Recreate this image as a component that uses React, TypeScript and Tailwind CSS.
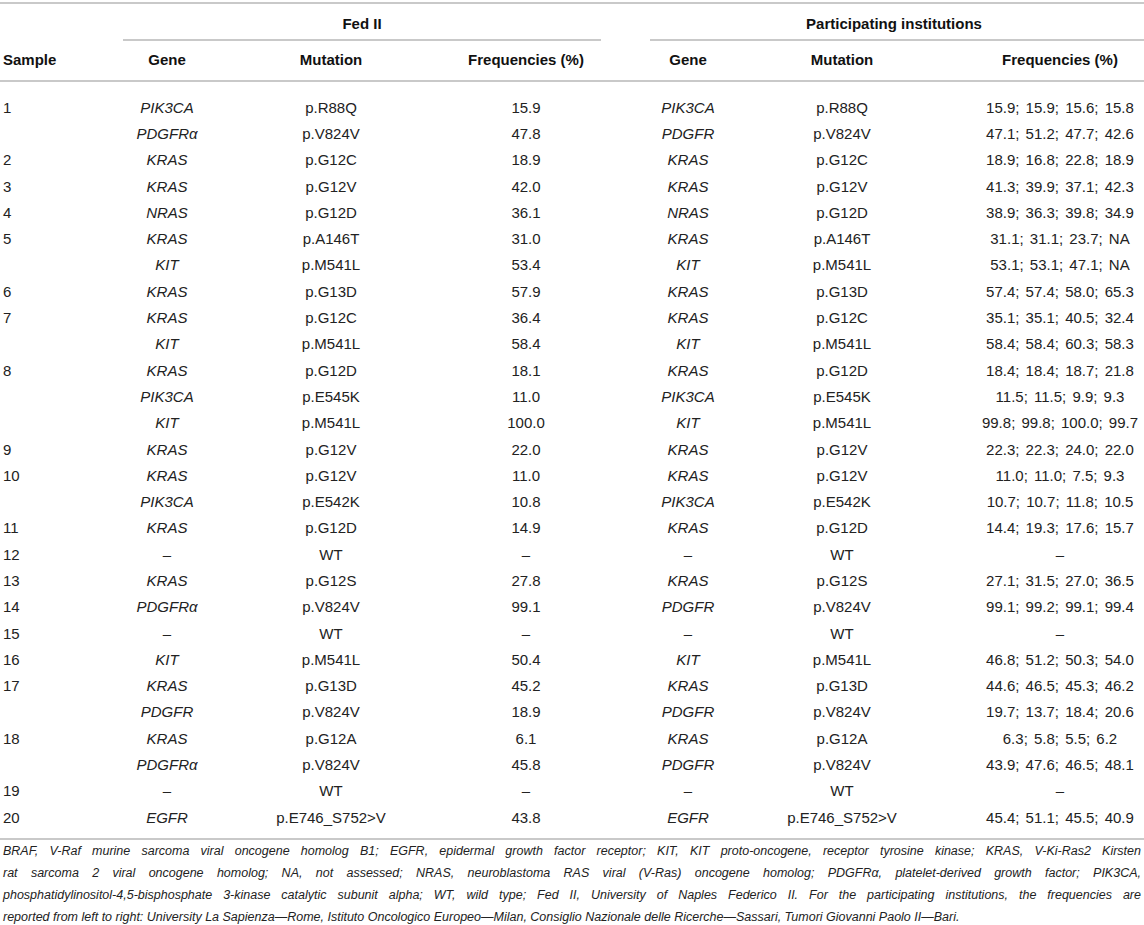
import React from "react";

type Row = [string, string, string, string, string, string, string];

const rows: Row[] = [
  ["1", "PIK3CA", "p.R88Q", "15.9", "PIK3CA", "p.R88Q", "15.9; 15.9; 15.6; 15.8"],
  ["", "PDGFRα", "p.V824V", "47.8", "PDGFR", "p.V824V", "47.1; 51.2; 47.7; 42.6"],
  ["2", "KRAS", "p.G12C", "18.9", "KRAS", "p.G12C", "18.9; 16.8; 22.8; 18.9"],
  ["3", "KRAS", "p.G12V", "42.0", "KRAS", "p.G12V", "41.3; 39.9; 37.1; 42.3"],
  ["4", "NRAS", "p.G12D", "36.1", "NRAS", "p.G12D", "38.9; 36.3; 39.8; 34.9"],
  ["5", "KRAS", "p.A146T", "31.0", "KRAS", "p.A146T", "31.1; 31.1; 23.7; NA"],
  ["", "KIT", "p.M541L", "53.4", "KIT", "p.M541L", "53.1; 53.1; 47.1; NA"],
  ["6", "KRAS", "p.G13D", "57.9", "KRAS", "p.G13D", "57.4; 57.4; 58.0; 65.3"],
  ["7", "KRAS", "p.G12C", "36.4", "KRAS", "p.G12C", "35.1; 35.1; 40.5; 32.4"],
  ["", "KIT", "p.M541L", "58.4", "KIT", "p.M541L", "58.4; 58.4; 60.3; 58.3"],
  ["8", "KRAS", "p.G12D", "18.1", "KRAS", "p.G12D", "18.4; 18.4; 18.7; 21.8"],
  ["", "PIK3CA", "p.E545K", "11.0", "PIK3CA", "p.E545K", "11.5; 11.5; 9.9; 9.3"],
  ["", "KIT", "p.M541L", "100.0", "KIT", "p.M541L", "99.8; 99.8; 100.0; 99.7"],
  ["9", "KRAS", "p.G12V", "22.0", "KRAS", "p.G12V", "22.3; 22.3; 24.0; 22.0"],
  ["10", "KRAS", "p.G12V", "11.0", "KRAS", "p.G12V", "11.0; 11.0; 7.5; 9.3"],
  ["", "PIK3CA", "p.E542K", "10.8", "PIK3CA", "p.E542K", "10.7; 10.7; 11.8; 10.5"],
  ["11", "KRAS", "p.G12D", "14.9", "KRAS", "p.G12D", "14.4; 19.3; 17.6; 15.7"],
  ["12", "–", "WT", "–", "–", "WT", "–"],
  ["13", "KRAS", "p.G12S", "27.8", "KRAS", "p.G12S", "27.1; 31.5; 27.0; 36.5"],
  ["14", "PDGFRα", "p.V824V", "99.1", "PDGFR", "p.V824V", "99.1; 99.2; 99.1; 99.4"],
  ["15", "–", "WT", "–", "–", "WT", "–"],
  ["16", "KIT", "p.M541L", "50.4", "KIT", "p.M541L", "46.8; 51.2; 50.3; 54.0"],
  ["17", "KRAS", "p.G13D", "45.2", "KRAS", "p.G13D", "44.6; 46.5; 45.3; 46.2"],
  ["", "PDGFR", "p.V824V", "18.9", "PDGFR", "p.V824V", "19.7; 13.7; 18.4; 20.6"],
  ["18", "KRAS", "p.G12A", "6.1", "KRAS", "p.G12A", "6.3; 5.8; 5.5; 6.2"],
  ["", "PDGFRα", "p.V824V", "45.8", "PDGFR", "p.V824V", "43.9; 47.6; 46.5; 48.1"],
  ["19", "–", "WT", "–", "–", "WT", "–"],
  ["20", "EGFR", "p.E746_S752>V", "43.8", "EGFR", "p.E746_S752>V", "45.4; 51.1; 45.5; 40.9"],
];

const footnote = [
  "BRAF, V-Raf murine sarcoma viral oncogene homolog B1; EGFR, epidermal growth factor receptor; KIT, KIT proto-oncogene, receptor tyrosine kinase; KRAS, V-Ki-Ras2 Kirsten",
  "rat sarcoma 2 viral oncogene homolog; NA, not assessed; NRAS, neuroblastoma RAS viral (V-Ras) oncogene homolog; PDGFRα, platelet-derived growth factor; PIK3CA,",
  "phosphatidylinositol-4,5-bisphosphate 3-kinase catalytic subunit alpha; WT, wild type; Fed II, University of Naples Federico II. For the participating institutions, the frequencies are",
];

const cols = "grid grid-cols-[117px_100px_228px_162px_37px_88px_220px_192px]";

function Rule() {
  return <div className="h-[2px] bg-[#c9c9c9]" />;
}

export default function App() {
  return (
    <div className="w-[1144px] h-[925px] bg-white text-[#222] font-['Liberation_Sans',Arial,sans-serif] text-[15px] overflow-hidden">
      <div className="pt-[2px]">
        <Rule />
      </div>

      {/* group headers */}
      <div className={`${cols} font-bold text-[#111]`}>
        <div className="col-start-2 col-span-3 flex flex-col pt-[11px]">
          <div className="text-center leading-[18px]">Fed II</div>
          <div className="mt-[6px] mx-[6px] h-[1.5px] bg-[#c9c9c9]" />
        </div>
        <div className="col-start-6 col-span-3 flex flex-col pt-[11px]">
          <div className="text-center leading-[18px]">Participating institutions</div>
          <div className="mt-[6px] ml-[6px] h-[1.5px] bg-[#c9c9c9]" />
        </div>
      </div>

      {/* column headers */}
      <div className={`${cols} font-bold text-[#111] h-[39px] items-center`}>
        <div className="pl-[3px]">Sample</div>
        <div className="text-center">Gene</div>
        <div className="text-center">Mutation</div>
        <div className="text-center">Frequencies (%)</div>
        <div />
        <div className="text-center">Gene</div>
        <div className="text-center">Mutation</div>
        <div className="text-center pl-[24px]">Frequencies (%)</div>
      </div>
      <Rule />

      {/* body */}
      <div className="pt-[13px] pb-[7px]">
        {rows.map((r, i) => (
          <div key={i} className={`${cols} h-[26.3px] items-center leading-[18px]`}>
            <div className="pl-[3px]">{r[0]}</div>
            <div className="text-center italic">{r[1]}</div>
            <div className="text-center">{r[2]}</div>
            <div className="text-center">{r[3]}</div>
            <div />
            <div className="text-center italic">{r[4]}</div>
            <div className="text-center">{r[5]}</div>
            <div className="text-center pl-[24px] [word-spacing:2px]">{r[6]}</div>
          </div>
        ))}
      </div>
      <Rule />

      {/* footnote */}
      <div className="px-[3px] text-[12.5px] leading-[22px] italic text-[#222]">
        {footnote.map((line, i) => (
          <div key={i} className="whitespace-nowrap text-justify [text-align-last:justify]">
            {line}
          </div>
        ))}
        <div className="whitespace-nowrap">
          reported from left to right: University La Sapienza—Rome, Istituto Oncologico Europeo—Milan, Consiglio
          Nazionale delle Ricerche—Sassari, Tumori Giovanni Paolo II—Bari.
        </div>
      </div>
    </div>
  );
}
